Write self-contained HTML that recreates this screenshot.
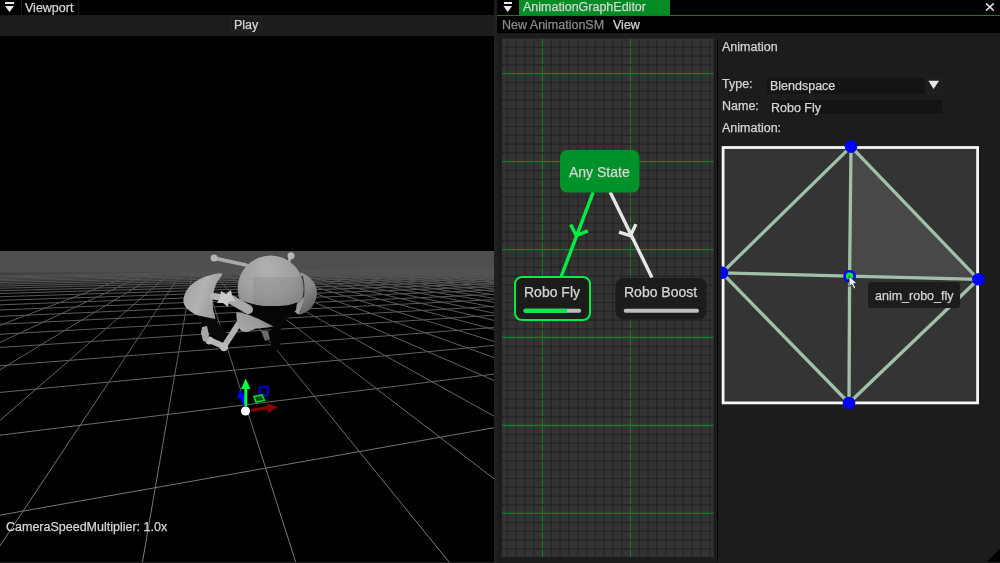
<!DOCTYPE html>
<html><head><meta charset="utf-8"><style>
*{margin:0;padding:0;box-sizing:border-box}
html,body{width:1000px;height:563px;overflow:hidden;background:#1c1c1c;font-family:"Liberation Sans",sans-serif}
.a{position:absolute}
.t{position:absolute;white-space:nowrap;line-height:1;will-change:transform;-webkit-text-stroke:0.25px currentColor}
</style></head><body>

<div class="a" style="left:0;top:0;width:494px;height:15px;background:#000"></div>
<div class="a" style="left:5px;top:2px;width:9px;height:2px;background:#e6e6e6"></div>
<svg class="a" style="left:0;top:0" width="20" height="15"><path d="M5 6H14L9.5 12Z" fill="#e6e6e6"/></svg>
<div class="a" style="left:21px;top:0;width:1px;height:15px;background:#1a1a1a"></div>
<div class="a" style="left:78px;top:0;width:1px;height:15px;background:#1a1a1a"></div>
<div class="t" style="left:25px;top:2.22px;font-size:12.5px;color:#d6d6d6;">Viewport</div>
<div class="a" style="left:0;top:15px;width:494px;height:21px;background:#1c1c1c"></div>
<div class="a" style="left:231px;top:16px;width:31px;height:15px;border:1px solid #222;border-radius:2px"></div>
<div class="t" style="left:233.8px;top:19.32px;font-size:12.5px;color:#d6d6d6;">Play</div>
<svg class="a" style="left:0;top:36px" width="494" height="526" viewBox="0 36 494 526">
<rect x="0" y="36" width="494" height="526" fill="#000"/>
<defs><linearGradient id="hz" x1="0" y1="0" x2="0" y2="1"><stop offset="0" stop-color="#4f4f4f"/><stop offset="0.15" stop-color="#4a4a4a" stop-opacity="0.85"/><stop offset="0.5" stop-color="#404040" stop-opacity="0.35"/><stop offset="1" stop-color="#404040" stop-opacity="0"/></linearGradient></defs>
<rect x="0" y="251" width="494" height="21" fill="#4f4f4f"/>
<rect x="0" y="271" width="494" height="24" fill="url(#hz)"/>
<defs><linearGradient id="gl" gradientUnits="userSpaceOnUse" x1="0" y1="251" x2="0" y2="560"><stop offset="0" stop-color="#4f4f4f"/><stop offset="0.13" stop-color="#565656"/><stop offset="0.32" stop-color="#5e5e5e"/><stop offset="0.65" stop-color="#727272"/><stop offset="1" stop-color="#7c7c7c"/></linearGradient></defs>
<path d="M-37878.3 14739.1L136.1 273.5M-4601.7 2495.1L147.7 273.3M-1806.5 1466.6L159.2 273.1M-767.5 1084.3L170.4 272.9M-225.2 884.7L181.5 272.7M107.9 762.2L192.4 272.6M333.2 679.3L203.1 272.4M495.8 619.5L213.6 272.2M618.7 574.2L224.0 272.0M714.8 538.9L234.2 271.8M792.0 510.5L244.2 271.6M855.4 487.1L254.1 271.5M908.4 467.6L263.8 271.3M953.4 451.1L273.4 271.1M992.0 436.9L282.8 271.0M1025.6 424.5L292.1 270.8M1055.0 413.7L301.2 270.6M1080.9 404.2L310.2 270.5M1104.0 395.7L319.1 270.3M1124.8 388.0L327.9 270.2M1143.4 381.2L336.5 270.0M1160.3 375.0L344.9 269.9M1175.7 369.3L353.3 269.7M1189.7 364.1L361.6 269.6M1202.6 359.4L369.7 269.4M1214.5 355.0L377.7 269.3M1225.4 351.0L385.6 269.2M1235.6 347.3L393.4 269.0M1245.0 343.8L401.0 268.9M1253.8 340.6L408.6 268.7M1262.0 337.6L416.1 268.6M1269.6 334.7L423.5 268.5M1276.8 332.1L430.7 268.4M1283.6 329.6L437.9 268.2M1290.0 327.3L445.0 268.1M1296.0 325.0L452.0 268.0M1301.6 323.0L458.9 267.9M1307.0 321.0L465.7 267.7M1312.1 319.1L472.4 267.6M1316.9 317.3L479.0 267.5M1321.5 315.6L485.5 267.4M1325.9 314.0L492.0 267.3M1330.0 312.5L498.4 267.2M1334.0 311.1L504.7 267.1M1337.8 309.7L510.9 266.9M1341.4 308.3L517.0 266.8M1344.9 307.1L523.1 266.7M1348.2 305.8L529.1 266.6M1351.3 304.7L535.0 266.5M1354.4 303.5L540.8 266.4M1357.3 302.5L546.6 266.3M1360.1 301.4L552.3 266.2M1362.8 300.4L558.0 266.1M1365.4 299.5L563.5 266.0M1367.9 298.6L569.0 265.9M1370.4 297.7L574.5 265.8M1372.7 296.8L579.9 265.7M1374.9 296.0L585.2 265.6M1377.1 295.2L590.4 265.5M1379.2 294.4L595.6 265.5M1381.2 293.7L600.8 265.4M1383.2 292.9L605.9 265.3M1385.1 292.2L610.9 265.2M1386.9 291.6L615.8 265.1M1388.7 290.9L620.8 265.0M1390.4 290.3L625.6 264.9M1392.1 289.7L630.4 264.8M-12493.3 4612.1L1480.3 256.0M-23209.3 4621.8L1464.7 256.0M-33925.4 4631.4L1449.5 255.9M-44641.4 4641.1L1434.6 255.9M-55357.5 4650.8L1420.1 255.8M-66073.5 4660.4L1406.0 255.7M-76789.6 4670.1L1392.1 255.7M-87505.6 4679.8L1378.6 255.6M-98221.7 4689.4L1365.3 255.6M-108937.7 4699.1L1352.4 255.5M-119653.7 4708.7L1339.8 255.5M-130369.8 4718.4L1327.4 255.4M-141085.8 4728.1L1315.3 255.4M-151801.9 4737.7L1303.4 255.3M-162517.9 4747.4L1291.8 255.3M-173234.0 4757.1L1280.4 255.2M-183950.0 4766.7L1269.3 255.2M-194666.1 4776.4L1258.4 255.1M-205382.1 4786.0L1247.7 255.1M-216098.2 4795.7L1237.2 255.0M-226814.2 4805.4L1226.9 255.0M-237530.2 4815.0L1216.9 254.9M-248246.3 4824.7L1207.0 254.9M-258962.3 4834.3L1197.3 254.9" stroke="url(#gl)" stroke-width="1" fill="none"/>

<defs>
<radialGradient id="hd" cx="0.45" cy="0.2" r="0.85"><stop offset="0" stop-color="#b0b0b0"/><stop offset="0.5" stop-color="#a0a0a0"/><stop offset="0.8" stop-color="#8c8c8c"/><stop offset="1" stop-color="#6a6a6a"/></radialGradient>
<linearGradient id="wl" x1="0" y1="0" x2="1" y2="0.4"><stop offset="0" stop-color="#a0a0a0"/><stop offset="0.55" stop-color="#b2b2b2"/><stop offset="1" stop-color="#9a9a9a"/></linearGradient>
<linearGradient id="bd" x1="0" y1="0.6" x2="1" y2="0"><stop offset="0" stop-color="#a6a6a6"/><stop offset="0.5" stop-color="#9a9a9a"/><stop offset="1" stop-color="#4a4a4a"/></linearGradient>
<linearGradient id="wr" x1="0" y1="0" x2="0.4" y2="1"><stop offset="0" stop-color="#9c9c9c"/><stop offset="0.5" stop-color="#888"/><stop offset="1" stop-color="#626262"/></linearGradient>
</defs>
<g>
<path d="M214.1 258.1L246 265" stroke="#a9a9a9" stroke-width="3.8" stroke-linecap="round"/>
<circle cx="214.1" cy="258.1" r="3.5" fill="#b4b4b4"/>
<path d="M291 256L288 264" stroke="#a9a9a9" stroke-width="3" stroke-linecap="round"/>
<circle cx="291" cy="255.8" r="3.5" fill="#b8b8b8"/>
<path d="M222.0 273.8C220.8 272.4 213.2 274.4 209.0 275.6C204.8 276.8 200.1 278.8 196.5 281.0C192.9 283.2 189.6 286.2 187.5 289.0C185.4 291.8 184.4 295.0 183.8 297.5C183.2 300.0 183.2 301.9 184.0 304.0C184.8 306.1 186.0 308.0 188.5 310.0C191.0 312.0 194.9 314.5 199.2 316.2C203.5 317.9 212.2 321.3 214.5 320.0C216.8 318.7 213.2 312.6 213.0 308.5C212.8 304.4 212.5 299.8 213.0 295.7C213.5 291.6 214.7 287.6 216.2 284.0C217.7 280.4 223.2 275.2 222.0 273.8Z" fill="url(#wl)"/>
<path d="M300 272.5C305 273.5 311 278 314.5 283.5C316.5 287 317.2 291 316.9 294C316.5 300 313.5 306 309 310C306 312.5 302.5 314 299 314.8L297 313C301 306 303.5 298 303.5 291C303.5 284 302 277 300 272.5Z" fill="url(#wr)"/><path d="M302 276Q306.5 292 299.5 312" stroke="#383838" stroke-width="1.8" fill="none"/>
<path d="M304.5 296.4L291.8 309.2L298.2 314.5Q303 306 304.5 296.4Z" fill="#9a9a9a"/>
<path d="M251 303L297 302L296 310L288 318L281 325L270 327L252 322Z" fill="#060606"/>
<path d="M270.5 325L281 325L280 350L271 350Z" fill="#050505"/>
<path d="M261 331L268 331L270 339L265 341Z" fill="#6a6a6a"/>
<path d="M196 315L215 319L230 338L222 344L206 330Z" fill="#080808"/>
<path d="M238.2 324.4L224 346.5" stroke="#b0b0b0" stroke-width="6" stroke-linecap="round" fill="none"/>
<path d="M224 346.5L209.4 340" stroke="#b4b4b4" stroke-width="6" stroke-linecap="round" fill="none"/>
<circle cx="209.5" cy="340.5" r="3.9" fill="#b8b8b8"/>
<circle cx="224" cy="347" r="4.2" fill="#bababa"/>
<path d="M202 327L207 326L209 335L207 342L203 341L201 333Z" fill="#a6a6a6"/>
<path d="M236.4 312.2C242 312.5 247 314 251.3 315.8C256 318 259 319 262 320.5C266 322.5 270 324.5 273.4 326.4C268 327.5 262 328 256.3 328.6C252 329.5 249 332 245.7 332.1C242 331.5 240 330 239.3 327.9C237 323 236 317 236.4 312.2Z" fill="url(#bd)"/>
<path d="M213.4 296.2L227.7 298.6" stroke="#b6b6b6" stroke-width="6.5" stroke-linecap="round" fill="none"/>
<path d="M231 299.5L248.5 309.5" stroke="#a8a8a8" stroke-width="9" stroke-linecap="round" fill="none"/>
<path d="M221 291L226 294L231 290L232 296L235 301L229 301L228 307L223 303L217 303L220 298Z" fill="#cacaca"/>
<clipPath id="hc"><path d="M230 250H310V296.4Q300 302.8 296 302.8Q288 306 277.9 306Q266 306.5 256.6 304.9Q248 303 238 299.5L230 296Z"/></clipPath><circle cx="270.6" cy="288.6" r="33" fill="url(#hd)" clip-path="url(#hc)"/><g clip-path="url(#hc)"><path d="M253 277H305V310H253Z" fill="#5a5a5a" opacity="0.14" clip-path="url(#hc2)"/></g><clipPath id="hc2"><circle cx="270.6" cy="288.6" r="33"/></clipPath>
</g>


<path d="M259.5 387.5L267.9 386.5L267.9 395L259.5 396Z" fill="#000033" stroke="#0000ee" stroke-width="1.6"/>
<path d="M254 396.5L262 395L264.5 400.5L256 402Z" fill="#0a4a0a" stroke="#00dd33" stroke-width="1.6"/>
<path d="M251 410.5L268.5 407.5" stroke="#8b0000" stroke-width="3.2"/>
<path d="M266.8 403.6L277.5 407L267.8 413.2Z" fill="#8b0000"/>
<path d="M244 405L240.5 394" stroke="#0000ff" stroke-width="3"/>
<path d="M237.2 398.6L239.8 389.6L245.5 397Z" fill="#0000ff"/>
<path d="M245.8 406L245.8 388" stroke="#00ff44" stroke-width="3"/>
<path d="M241 389L245.7 378.5L250.5 389Z" fill="#00ff44"/>
<circle cx="245.5" cy="411" r="4.6" fill="#fff"/>

</svg>
<div class="t" style="left:5.5px;top:521.17px;font-size:12.5px;color:#d6d6d6;">CameraSpeedMultiplier: 1.0x</div>
<div class="a" style="left:494px;top:15px;width:2.5px;height:548px;background:#212121"></div>
<div class="a" style="left:497px;top:0;width:503px;height:15px;background:#000"></div>
<div class="a" style="left:503.5px;top:2px;width:8.6px;height:2px;background:#e6e6e6"></div>
<svg class="a" style="left:497px;top:0" width="20" height="15"><path d="M6.4 6H15.1L10.75 12Z" fill="#e6e6e6"/></svg>
<div class="a" style="left:519px;top:0;width:151.4px;height:15px;background:#038b24"></div>
<div class="a" style="left:497px;top:15px;width:503px;height:1px;background:#127b2a"></div>
<div class="t" style="left:523.3px;top:1.42px;font-size:12.5px;color:#d6d6d6;">AnimationGraphEditor</div>
<svg class="a" style="left:983px;top:0" width="17" height="15"><path d="M3 3.4L10.8 10.6M10.8 3.4L3 10.6" stroke="#dcdcdc" stroke-width="1.6"/></svg>
<div class="a" style="left:497px;top:16px;width:503px;height:17px;background:#000"></div>
<div class="t" style="left:501.8px;top:19.22px;font-size:12.5px;color:#8c8c8c;">New AnimationSM</div>
<div class="t" style="left:613.4px;top:19.22px;font-size:12.5px;color:#d6d6d6;">View</div>
<div class="a" style="left:497px;top:33px;width:503px;height:530px;background:#1c1c1c"></div>
<svg class="a" style="left:502px;top:38px" width="212" height="520" viewBox="502 38 212 520">
<rect x="502" y="38.8" width="211.5" height="518.2" fill="#333"/>
<path d="M498.50 38.5V557M507.30 38.5V557M516.10 38.5V557M524.90 38.5V557M533.70 38.5V557M542.50 38.5V557M551.30 38.5V557M560.10 38.5V557M568.90 38.5V557M577.70 38.5V557M586.50 38.5V557M595.30 38.5V557M604.10 38.5V557M612.90 38.5V557M621.70 38.5V557M630.50 38.5V557M639.30 38.5V557M648.10 38.5V557M656.90 38.5V557M665.70 38.5V557M674.50 38.5V557M683.30 38.5V557M692.10 38.5V557M700.90 38.5V557M709.70 38.5V557" stroke="#252525" stroke-width="1.1" fill="none"/>
<path d="M542.5 38.5V557M630.5 38.5V557" stroke="#0f8128" stroke-width="1" fill="none"/>
<path d="M502 38.50H713.5M502 47.30H713.5M502 56.10H713.5M502 64.90H713.5M502 73.70H713.5M502 82.50H713.5M502 91.30H713.5M502 100.10H713.5M502 108.90H713.5M502 117.70H713.5M502 126.50H713.5M502 135.30H713.5M502 144.10H713.5M502 152.90H713.5M502 161.70H713.5M502 170.50H713.5M502 179.30H713.5M502 188.10H713.5M502 196.90H713.5M502 205.70H713.5M502 214.50H713.5M502 223.30H713.5M502 232.10H713.5M502 240.90H713.5M502 249.70H713.5M502 258.50H713.5M502 267.30H713.5M502 276.10H713.5M502 284.90H713.5M502 293.70H713.5M502 302.50H713.5M502 311.30H713.5M502 320.10H713.5M502 328.90H713.5M502 337.70H713.5M502 346.50H713.5M502 355.30H713.5M502 364.10H713.5M502 372.90H713.5M502 381.70H713.5M502 390.50H713.5M502 399.30H713.5M502 408.10H713.5M502 416.90H713.5M502 425.70H713.5M502 434.50H713.5M502 443.30H713.5M502 452.10H713.5M502 460.90H713.5M502 469.70H713.5M502 478.50H713.5M502 487.30H713.5M502 496.10H713.5M502 504.90H713.5M502 513.70H713.5M502 522.50H713.5M502 531.30H713.5M502 540.10H713.5M502 548.90H713.5" stroke="#252525" stroke-width="1.1" fill="none"/>
<path d="M502 73.70H713.5M502 161.60H713.5M502 249.60H713.5M502 337.50H713.5M502 425.50H713.5M502 513.40H713.5" stroke="#0f8128" stroke-width="1.3" fill="none"/>
<path d="M593.2 192.1L561.2 276.5" stroke="#00ee44" stroke-width="3.4"/>
<path d="M570.6 224.5L576.3 235.6L587.9 230.9" stroke="#00ee44" stroke-width="3.4" fill="none"/>
<path d="M610.1 192.1L651.9 277.4" stroke="#e6e6e6" stroke-width="3.4"/>
<path d="M619 232.1L630.5 235.6L635.9 224.1" stroke="#e6e6e6" stroke-width="3.4" fill="none"/>
<rect x="560" y="150" width="79.5" height="42.5" rx="7" fill="#009128"/>
<rect x="515" y="277" width="75" height="43" rx="7" fill="#1c1c1c" stroke="#00ee44" stroke-width="2"/>
<rect x="615.5" y="278" width="91.3" height="41.5" rx="8" fill="#1c1c1c"/>
<path d="M525.5 310.8H579.2" stroke="#bcbcbc" stroke-width="4" stroke-linecap="round"/>
<path d="M525.5 310.8H567" stroke="#00ee44" stroke-width="4"/><circle cx="525.5" cy="310.8" r="2" fill="#00ee44"/>
<path d="M625.7 310.8H697" stroke="#bcbcbc" stroke-width="4" stroke-linecap="round"/>
</svg>
<div class="t" style="left:568.5px;top:164.65px;font-size:14px;color:#d6d6d6;">Any State</div>
<div class="t" style="left:523.6px;top:285.15px;font-size:14px;color:#d6d6d6;">Robo Fly</div>
<div class="t" style="left:623.9px;top:285.45px;font-size:14px;color:#d6d6d6;">Robo Boost</div>
<div class="a" style="left:717px;top:39.5px;width:1px;height:521.5px;background:#000"></div>
<div class="t" style="left:722.1px;top:41.42px;font-size:12.5px;color:#d6d6d6;">Animation</div>
<div class="t" style="left:722px;top:78.02px;font-size:12.5px;color:#d6d6d6;">Type:</div>
<div class="a" style="left:767px;top:77.8px;width:175px;height:15.8px;background:#1d1d1d;border:1px solid #222;border-radius:2px"></div>
<div class="a" style="left:767px;top:77.8px;width:158px;height:15.8px;background:#141414;border-radius:2px 0 0 2px"></div>
<div class="t" style="left:770px;top:79.82px;font-size:12.5px;color:#d6d6d6;">Blendspace</div>
<svg class="a" style="left:925px;top:78px" width="16" height="14"><path d="M3.4 2.7H14.1L8.6 11.1Z" fill="#e6e6e6"/></svg>
<div class="t" style="left:722px;top:100.02px;font-size:12.5px;color:#d6d6d6;">Name:</div>
<div class="a" style="left:768.8px;top:98.9px;width:175.2px;height:16.4px;background:#141414;border:1px solid #1f1f1f;border-radius:2px"></div>
<div class="t" style="left:770.6px;top:101.92px;font-size:12.5px;color:#d6d6d6;">Robo Fly</div>
<div class="t" style="left:722px;top:121.82px;font-size:12.5px;color:#d6d6d6;">Animation:</div>
<svg class="a" style="left:721px;top:130px" width="279" height="280" viewBox="721 130 279 280">
<rect x="723.1" y="147.5" width="254.5" height="255.4" fill="#343434" stroke="#f6f6f6" stroke-width="2.8"/>
<path d="M851.0 146.6L849.6 276.2L978.4 279.3Z" fill="#484848"/>
<path d="M851.0 146.6L722.0 272.8M851.0 146.6L849.6 276.2M851.0 146.6L978.4 279.3M722.0 272.8L849.6 276.2M849.6 276.2L978.4 279.3M722.0 272.8L849.0 403.0M849.6 276.2L849.0 403.0M978.4 279.3L849.0 403.0" stroke="#a1c0a9" stroke-width="3.3" fill="none"/>
<circle cx="851.0" cy="146.6" r="6.3" fill="#0000ff"/>
<circle cx="722.0" cy="272.8" r="6.3" fill="#0000ff"/>
<circle cx="978.4" cy="279.3" r="6.3" fill="#0000ff"/>
<circle cx="849.0" cy="403.0" r="6.3" fill="#0000ff"/>
<circle cx="849.6" cy="276.2" r="6.3" fill="#0000ff"/>
<circle cx="849.6" cy="276.2" r="3.6" fill="#00ee33"/>
<path d="M849.1 275.9L849.1 286.8L851.7 284.4L853.9 288.9L855.8 288L853.7 283.6L857.1 283.6Z" fill="#f4f4f4" stroke="#111" stroke-width="0.7"/>
</svg>
<div class="a" style="left:868px;top:282.3px;width:91.5px;height:25.7px;background:#1c1c1c;border-radius:3px"></div>
<div class="t" style="left:874.9px;top:290.32px;font-size:12.5px;color:#d6d6d6;">anim_robo_fly</div>
<svg class="a" style="left:985px;top:548px" width="15" height="15"><path d="M15 0.7V14H2Z" fill="#000"/></svg>
</body></html>
